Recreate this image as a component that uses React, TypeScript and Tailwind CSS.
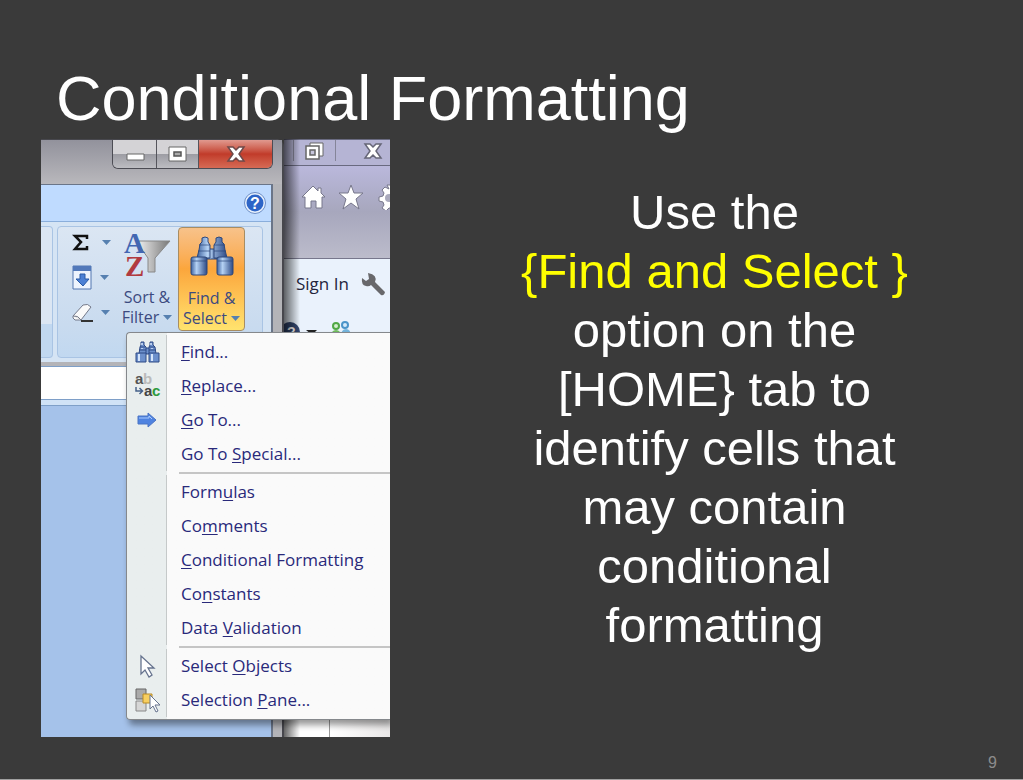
import type { ReactNode } from "react";

type MenuItem = {
  before: string;
  hotkey: string;
  after: string;
  icon?: ReactNode;
};

const FindIcon = () => (
  <svg width="26" height="24" viewBox="0 0 26 24">
    <g fill="#6d90cc" stroke="#2f4a86" strokeWidth="1">
      <path d="M11 8h5v6h-5z" />
      <path d="M7 2h3v3l2 2v7H5l1-7 1-2zM16 2h3v3l2 2 1 7h-7V7l1-2z" />
      <path d="M2 13h10v9H2zM15 13h10v9H15z" />
    </g>
    <path d="M6 7h5M15 7h6M5 10h7M15 10h7" stroke="#2f4a86" />
    <path d="M5 14v7M18 14v7" stroke="#d5e5fb" strokeWidth="2" />
    <path d="M8 3v2M17 3v2M8 8v1M18 8v1" stroke="#d5e5fb" strokeWidth="1.500" />
  </svg>
);

const ReplaceIcon = () => (
  <svg width="26" height="28" viewBox="0 0 26 28" className="overflow-visible" fontFamily="Liberation Sans, sans-serif" fontWeight="bold">
    <text x="1" y="12" fontSize="15" fill="#555">a</text>
    <text x="9" y="12" fontSize="15" fill="#bbb">b</text>
    <text x="10" y="24" fontSize="15" fill="#444">a</text>
    <text x="18" y="24" fontSize="15" fill="#2d9a3c">c</text>
    <path d="M2 15v4h6M5.500 16l3 3-3 3" fill="none" stroke="#46618a" strokeWidth="1.500" />
  </svg>
);

const GoToIcon = () => (
  <svg width="22" height="18" viewBox="0 0 22 18">
    <path d="M2 5h10V2l8 7-8 7v-3H2z" fill="#4f83e0" stroke="#4a74c4" />
    <path d="M3 7h10V5l3 3" fill="none" stroke="#a9caff" />
  </svg>
);

const Pointer = () => (
  <svg width="18" height="25" viewBox="0 0 18 25">
    <path d="M3 2v18l4-4 4 7 3-2-4-7h6z" fill="#fff" stroke="#66738e" strokeWidth="1.300" />
  </svg>
);

const SelectionPaneIcon = () => (
  <svg width="28" height="26" viewBox="0 0 28 26">
    <path d="M3 2h10v10H3z" fill="#aaa" stroke="#666" />
    <path d="M3 14h10v10H3z" fill="#d6d6d6" stroke="#888" />
    <path d="M10 7h9v9h-9z" fill="#f8cf60" stroke="#b98b25" />
    <path d="M17 8v14l3-3 3 6 2-1-3-6h5z" fill="#fff" stroke="#66738e" />
  </svg>
);

const menuGroups: MenuItem[][] = [
  [
    { before: "", hotkey: "F", after: "ind...", icon: <FindIcon /> },
    { before: "", hotkey: "R", after: "eplace...", icon: <ReplaceIcon /> },
    { before: "", hotkey: "G", after: "o To...", icon: <GoToIcon /> },
    { before: "Go To ", hotkey: "S", after: "pecial..." },
  ],
  [
    { before: "Form", hotkey: "u", after: "las" },
    { before: "Co", hotkey: "m", after: "ments" },
    { before: "", hotkey: "C", after: "onditional Formatting" },
    { before: "Co", hotkey: "n", after: "stants" },
    { before: "Data ", hotkey: "V", after: "alidation" },
  ],
  [
    { before: "Select ", hotkey: "O", after: "bjects", icon: <Pointer /> },
    { before: "Selection ", hotkey: "P", after: "ane...", icon: <SelectionPaneIcon /> },
  ],
];

const Caret = () => (
  <svg width="9" height="5" viewBox="0 0 9 5" className="shrink-0">
    <path d="M0 0h9L4.500 5z" fill="#5680b0" />
  </svg>
);

const CloseGlyph = ({ stroke }: { stroke: string }) => (
  <svg width="20" height="18" viewBox="0 0 20 18">
    <path d="M2 2h5l3 3 3-3h5l-5 7 5 7h-5l-3-3-3 3H2l5-7z" fill="#fff" stroke={stroke} strokeWidth="1.500" />
  </svg>
);

function WindowButtons() {
  return (
    <div className="flex h-[29px] w-[161px] overflow-hidden rounded-b-md border border-t-0 border-[#4c4c54]">
      <button aria-label="Minimize" className="flex w-11 items-center justify-center border-r border-[#55555c] bg-linear-to-b from-[#d4d3d6] from-50% via-[#9c9ca3] via-50% to-[#bdbdc2]">
        <svg width="20" height="16" viewBox="0 0 20 16">
          <path d="M2 8h17v6H2z" fill="#fff" stroke="#666" />
        </svg>
      </button>
      <button aria-label="Restore" className="flex w-[42px] items-center justify-center border-r border-[#55555c] bg-linear-to-b from-[#d4d3d6] from-50% via-[#9c9ca3] via-50% to-[#bdbdc2]">
        <svg width="20" height="18" viewBox="0 0 20 18">
          <path d="M1 2h17v14H1z" fill="#fff" stroke="#666" />
          <path d="M6 7h7v4H6z" fill="#aaa" stroke="#555" strokeWidth="1.500" />
        </svg>
      </button>
      <button aria-label="Close" className="flex flex-1 items-center justify-center bg-linear-to-b from-[#e0998f] via-[#c13b2a] via-50% to-[#d66a55]">
        <CloseGlyph stroke="#6d4a4a" />
      </button>
    </div>
  );
}

function Binoculars() {
  return (
    <svg width="46" height="42" viewBox="0 0 46 42">
      <defs>
        <linearGradient id="barrel" x1="0" x2="1">
          <stop offset="0" stopColor="#3d629f" />
          <stop offset="0.350" stopColor="#b5d2f4" />
          <stop offset="1" stopColor="#2d4a86" />
        </linearGradient>
      </defs>
      <g fill="url(#barrel)" stroke="#2d477b">
        <rect x="18" y="13" width="10" height="10" />
        <path d="M13 2q3-2 6 0v4l2 3v13H8l2-8 1-6 2-2zM27 2q3-2 6 0v4l2 2 1 6 2 8H25V9l2-3z" />
        <rect x="2" y="21" width="16" height="18" rx="2" />
        <rect x="28" y="21" width="16" height="18" rx="2" />
      </g>
      <path d="M10 9h11M25 9h11M9 15h12M25 15h12M3 25h14M29 25h14" stroke="#2d477b" opacity="0.700" />
    </svg>
  );
}

function Ribbon() {
  return (
    <div className="flex h-[141px] gap-1 border-t border-[#8aaedb] bg-[#d5e4f4] pt-1 pb-1">
      <div className="w-3 rounded-r border border-l-0 border-[#a9c4e4] bg-linear-to-b from-[#dbe6f3] from-75% to-[#c1d8f0] to-75%" />
      <div className="flex flex-1 rounded border border-[#a9c4e4] bg-linear-to-b from-[#dbe6f3] via-[#c9dbef] via-75% to-[#c1d8f0]">
        <div className="flex w-[58px] flex-col gap-3 pt-1 pl-[14px]">
          <button aria-label="Sum" className="flex h-[23px] items-center gap-3">
            <svg width="18" height="17" viewBox="0 0 18 17">
              <path d="M15 5V2H3l6 6-6 7h12v-3" fill="none" stroke="#111" strokeWidth="2.500" />
            </svg>
            <Caret />
          </button>
          <button aria-label="Fill" className="flex h-[23px] items-center gap-2">
            <svg width="20" height="25" viewBox="0 0 20 25" className="shrink-0">
              <path d="M1 1h18v23H1z" fill="#eef4fd" stroke="#5277b0" />
              <path d="M1 1h18v5H1z" fill="#5279ba" />
              <path d="M8 9h5v5h4l-6 7-7-7h4z" fill="#4c80d4" stroke="#285aa6" />
            </svg>
            <Caret />
          </button>
          <button aria-label="Clear" className="flex h-[23px] items-center gap-2">
            <svg width="21" height="20" viewBox="0 0 21 20" className="shrink-0">
              <path d="M1 13L11 2q5-2 8 2L9 17H3q-3-2-2-4z" fill="#fafafa" stroke="#73798a" />
              <path d="M1 13q5-1 8 4" fill="#ddd" stroke="#73798a" />
              <path d="M9 18h12" stroke="#333" strokeWidth="2" />
            </svg>
            <Caret />
          </button>
        </div>
        <button className="flex w-[62px] flex-col items-center pt-1 text-base leading-5 text-[#3c4a80]">
          <svg width="50" height="48" viewBox="0 0 50 48" className="mb-2 overflow-visible">
            <defs>
              <linearGradient id="funnel" x1="0" x2="1">
                <stop offset="0" stopColor="#eee" />
                <stop offset="1" stopColor="#777" />
              </linearGradient>
            </defs>
            <path d="M17 10h31L33 27v14h-7V27L16 13z" fill="url(#funnel)" stroke="#888" />
            <text x="2" y="22" fontFamily="Liberation Serif, serif" fontSize="29" fontWeight="bold" fill="#4367b2">A</text>
            <text x="3" y="45" fontFamily="Liberation Serif, serif" fontSize="29" fontWeight="bold" fill="#b13a40">Z</text>
          </svg>
          <span className="whitespace-nowrap">Sort &amp;</span>
          <span className="flex items-center gap-1">Filter <Caret /></span>
        </button>
        <button className="flex h-[104px] w-[67px] flex-col items-center rounded-sm border border-[#a88d62] bg-linear-to-b from-[#f7c28a] via-[#fba63c] via-40% to-[#ffe36e] pt-1 text-base leading-5 text-[#3c4a80]">
          <span className="mb-2 flex h-12 items-start pt-1">
            <Binoculars />
          </span>
          <span className="whitespace-nowrap">Find &amp;</span>
          <span className="flex items-center gap-1">Select <Caret /></span>
        </button>
      </div>
      <div className="w-1" />
    </div>
  );
}

function OfficeWindow() {
  return (
    <div className="flex w-[243px] flex-col rounded-tr-lg border-t border-r-2 border-[#47474d] bg-[#b4b4b8]">
      <div className="flex h-11 justify-end bg-linear-to-b from-[#92929c] to-[#b9b8bc] pr-[9px]">
        <WindowButtons />
      </div>
      <div className="mr-[9px] flex flex-1 flex-col border-t border-r-2 border-[#6a7588]">
        <div className="flex h-9 items-center justify-end bg-[#bfdbff] pr-1">
          <button aria-label="Help">
            <svg width="24" height="24" viewBox="0 0 24 24" className="overflow-visible">
              <circle cx="12" cy="12" r="10.500" fill="#e8f1fd" stroke="#6d8fc7" />
              <circle cx="12" cy="12" r="8.500" fill="#2d65c7" />
              <text x="12" y="18" textAnchor="middle" fontFamily="Liberation Sans, sans-serif" fontSize="16" fontWeight="bold" fill="#fff">?</text>
            </svg>
          </button>
        </div>
        <Ribbon />
        <div className="mt-1 h-[34px] border-y border-[#7e9fc8] bg-white" />
        <div className="h-[5px] bg-[#d0e2f6]" />
        <div className="flex-1 border-t border-[#7e9fc8] bg-[#a5c2ea]" />
      </div>
    </div>
  );
}

function BrowserWindow() {
  return (
    <div className="flex min-w-0 flex-1 flex-col overflow-hidden bg-white">
      <div className="flex h-[27px] border-t border-b border-[#696a80] bg-[#b5b4d4] pb-1">
        <div className="w-[10px] border-r border-[#858599]" />
        <button aria-label="Restore browser" className="flex w-[42px] items-center justify-center border-r border-[#858599]">
          <svg width="21" height="20" viewBox="0 0 21 20">
            <path d="M6 2h13v13H6z" fill="#fff" stroke="#666" />
            <path d="M2 5h13v13H2z" fill="#fff" stroke="#666" strokeWidth="1.500" />
            <path d="M6 9h5v5H6z" fill="#c7c6dc" stroke="#666" strokeWidth="1.500" />
          </svg>
        </button>
        <button aria-label="Close browser" className="flex flex-1 items-center justify-center pl-5">
          <CloseGlyph stroke="#666677" />
        </button>
      </div>
      <div className="flex h-[92px] gap-3 bg-linear-to-b from-[#bab8dc] via-[#a7a7bd] to-[#bcbccb] pt-[18px] pl-4">
        <svg width="26" height="26" viewBox="0 0 26 26" className="shrink-0">
          <path d="M13 2L2 13h3v11h6v-7h5v7h6V13h3l-4-4V4h-3v3z" fill="#fff" stroke="#77778b" />
        </svg>
        <svg width="26" height="26" viewBox="0 0 26 26" className="shrink-0">
          <path d="M13 1l3 8h9l-7 6 3 10-8-6-8 6 3-10-7-6h9z" fill="#fff" stroke="#77778b" />
        </svg>
        <svg width="26" height="26" viewBox="0 0 26 26" className="shrink-0">
          <path d="M11 1h4l1 4 3 1 3-2 3 3-3 3 1 3 3 1v4l-4 1-1 3 2 3-4 2-3-3h-3l-3 3-4-3 2-3-1-3-4-1v-4l4-1 1-3-2-3 3-3 4 2z" fill="#fff" stroke="#77778b" />
          <circle cx="13" cy="14" r="4" fill="#aaaabd" />
        </svg>
      </div>
      <div className="flex flex-1 flex-col border-t border-[#77778c] bg-[#eaf2fc]">
        <div className="flex h-[50px] items-center gap-3 pl-3">
          <a href="#signin" className="text-[17px] whitespace-nowrap text-[#24243c]">Sign In</a>
          <svg width="26" height="26" viewBox="0 0 26 26" className="shrink-0">
            <path d="M7 2l1 6-3 2-4-3q-1 7 4 8 3 1 5-1l10 10q3 1 4-3L14 11q3-7-7-9z" fill="#68686b" />
          </svg>
        </div>
        <div className="flex h-[84px] items-start gap-3 pt-3">
          <svg width="34" height="20" viewBox="0 0 34 20" className="overflow-visible">
            <circle cx="6" cy="11" r="10" fill="#344770" />
            <text x="3" y="16" fontFamily="Liberation Sans, sans-serif" fontSize="14" fontWeight="bold" fill="#fff">?</text>
            <path d="M22 9h11l-5 5z" fill="#222" />
          </svg>
          <svg width="22" height="18" viewBox="0 0 22 18">
            <circle cx="6" cy="5" r="3" fill="#d6efcf" stroke="#50a845" strokeWidth="2" />
            <circle cx="15" cy="4" r="3" fill="#d5eafa" stroke="#4b94c9" strokeWidth="2" />
            <path d="M1 16q0-7 5-7t5 7z" fill="#70bd5c" />
            <path d="M11 16q0-8 5-8t5 8z" fill="#75b5dd" />
          </svg>
        </div>
        <div className="flex flex-1 bg-white">
          <div className="w-[46px] border-r border-[#999]" />
          <div className="flex-1 bg-linear-to-r from-white to-[#e9e7e7]" />
        </div>
      </div>
    </div>
  );
}

function FindSelectMenu() {
  return (
    <div className="absolute top-[193px] right-0 left-[85px] rounded-l border border-r-0 border-[#85888c] bg-linear-to-r from-[#e9eeee] from-[40px] to-[#fafafa] to-[40px] pt-[2px] pb-[2px] shadow-[3px_5px_6px_rgba(0,0,0,0.4)]">
      {menuGroups.map((group, i) => (
        <div key={i}>
          {i > 0 && <hr className="my-px ml-[52px] h-[2px] border-0 bg-[#c5c5c5]" />}
          {group.map((item) => (
            <button
              key={item.before + item.hotkey + item.after}
              className="flex h-[34px] w-full items-center text-left text-[17px] font-medium whitespace-nowrap text-[#29297a]"
            >
              <span className="flex w-10 shrink-0 items-center justify-center self-stretch border-r border-[#c5c9c9]">
                {item.icon}
              </span>
              <span className="pl-[14px]">
                {item.before}
                <span className="underline underline-offset-2">{item.hotkey}</span>
                {item.after}
              </span>
            </button>
          ))}
        </div>
      ))}
    </div>
  );
}

export default function App() {
  return (
    <main className="flex min-h-screen flex-col border-b border-[#a0a0a0] bg-[#3a3a3a] font-['Liberation_Sans',Arial,sans-serif] text-white">
      <h1 className="pt-15 pb-[3px] pl-14 text-[63px] leading-[76px] whitespace-nowrap">Conditional Formatting</h1>
      <div className="flex flex-1 pl-[41px]">
        <div className="relative flex h-[598px] w-[349px] shrink-0 overflow-hidden font-['Open_Sans','Noto_Sans',sans-serif]">
          <OfficeWindow />
          <BrowserWindow />
          {/* shadow the front window casts on the browser */}
          <div className="absolute inset-y-0 left-[243px] w-4 bg-linear-to-r from-black/60 to-transparent" />
          <FindSelectMenu />
        </div>
        <p className="flex-1 pt-11 pl-4 text-center text-[49px] leading-[59px]">
          Use the
          <br />
          <span className="text-[#ffff00]">{"{Find and Select }"}</span>
          <br />
          option on the
          <br />
          {"[HOME} tab to"}
          <br />
          identify cells that
          <br />
          may contain
          <br />
          conditional
          <br />
          formatting
        </p>
      </div>
      <footer className="self-end pr-[26px] pb-1 text-base leading-6 text-[#8c8c8c]">9</footer>
    </main>
  );
}
